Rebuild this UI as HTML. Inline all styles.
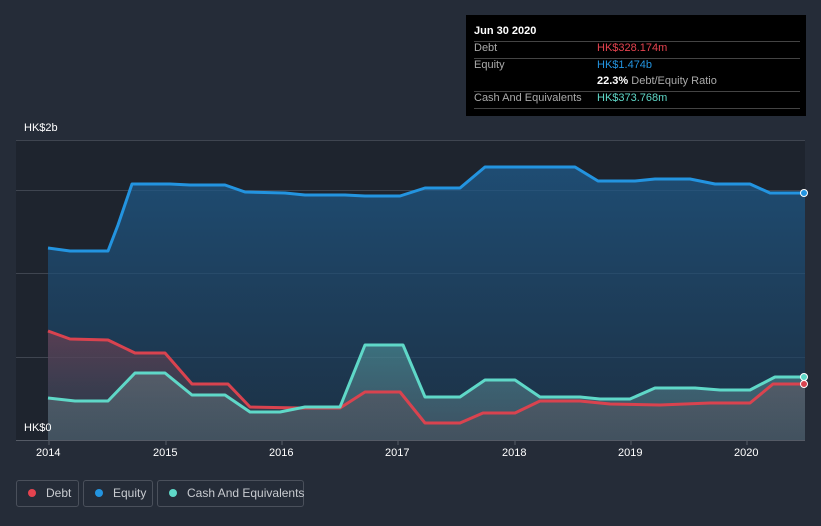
<!DOCTYPE html>
<html style="overflow:hidden;width:821px;height:526px"><head><style>
body{margin:0;width:821px;height:526px;background:#252c38;font-family:"Liberation Sans",sans-serif;overflow:hidden;position:relative}
.tt{position:absolute;left:466px;top:15px;width:340px;height:101px;background:#000;color:#fff;font-size:11px}
.tt .r{position:absolute;left:8px;right:6px;border-top:1px solid #444}
.lg{position:absolute;top:480px;height:27px;border:1px solid #4a505b;border-radius:3px;color:#c8cbd0;font-size:12px;line-height:25px;box-sizing:border-box;white-space:nowrap}
.lg i{display:inline-block;width:8px;height:8px;border-radius:50%;margin:0 10px 0 11px;vertical-align:0px}
.ax{position:absolute;color:#fff;font-size:11px}
</style></head><body>
<svg width="821" height="526" style="position:absolute;left:0;top:0">
<defs>
<linearGradient id="eq" x1="0" y1="0" x2="0" y2="1"><stop offset="0" stop-color="#1f5a8a" stop-opacity=".75"/><stop offset="1" stop-color="#1b3a55" stop-opacity=".6"/></linearGradient>
<linearGradient id="cs" x1="0" y1="0" x2="0" y2="1"><stop offset="0" stop-color="#5fb3b0" stop-opacity=".45"/><stop offset="1" stop-color="#7a8a95" stop-opacity=".35"/></linearGradient>
<linearGradient id="db" x1="0" y1="0" x2="0" y2="1"><stop offset="0" stop-color="#a0404e" stop-opacity=".45"/><stop offset="1" stop-color="#555" stop-opacity=".2"/></linearGradient>
</defs>
<rect x="16" y="140" width="789" height="300" fill="#1e242e"/>
<g stroke="#3f4550" stroke-width="1">
<line x1="16" y1="140.5" x2="805" y2="140.5"/><line x1="16" y1="190.5" x2="805" y2="190.5"/>
<line x1="16" y1="273.5" x2="805" y2="273.5"/><line x1="16" y1="357.5" x2="805" y2="357.5"/>
</g>
<path d="M48,248 L70,251 L108,251 L118,225 L132,184 L170,184 L190,185 L225,185 L245,192 L285,193 L305,195 L345,195 L365,196 L400,196 L425,188 L460,188 L485,167 L545,167 L575,167 L598,181 L635,181 L655,179 L690,179 L715,184 L750,184 L770,193 L805,193 L805,440 L48,440Z" fill="url(#eq)"/>
<path d="M48,398 L75,401 L108,401 L135,373 L165,373 L192,395 L225,395 L250,412 L280,412 L305,407 L340,407 L365,345 L403,345 L425,397 L460,397 L485,380 L515,380 L540,397 L580,397 L600,399 L630,399 L655,388 L695,388 L720,390 L750,390 L775,377 L805,377 L805,440 L48,440Z" fill="url(#cs)"/>
<path d="M48,331 L70,339 L108,340 L135,353 L165,353 L192,384 L228,384 L250,407 L300,408 L340,408 L365,392 L400,392 L425,423 L460,423 L483,413 L515,413 L540,401 L580,401 L610,404 L660,405 L710,403 L750,403 L773,384 L805,384 L805,440 L48,440Z" fill="url(#db)"/>
<g fill="none" stroke-width="3" stroke-linejoin="round">
<path d="M48,248 L70,251 L108,251 L118,225 L132,184 L170,184 L190,185 L225,185 L245,192 L285,193 L305,195 L345,195 L365,196 L400,196 L425,188 L460,188 L485,167 L545,167 L575,167 L598,181 L635,181 L655,179 L690,179 L715,184 L750,184 L770,193 L805,193" stroke="#2394e0"/>
<path d="M48,331 L70,339 L108,340 L135,353 L165,353 L192,384 L228,384 L250,407 L300,408 L340,408 L365,392 L400,392 L425,423 L460,423 L483,413 L515,413 L540,401 L580,401 L610,404 L660,405 L710,403 L750,403 L773,384 L805,384" stroke="#d9434f"/>
<path d="M48,398 L75,401 L108,401 L135,373 L165,373 L192,395 L225,395 L250,412 L280,412 L305,407 L340,407 L365,345 L403,345 L425,397 L460,397 L485,380 L515,380 L540,397 L580,397 L600,399 L630,399 L655,388 L695,388 L720,390 L750,390 L775,377 L805,377" stroke="#5fd8c8"/>
</g>
<circle cx="804" cy="193" r="3.5" fill="#2394e0" stroke="#fff" stroke-width="1"/>
<circle cx="804" cy="377" r="3.5" fill="#5fd8c8" stroke="#fff" stroke-width="1"/>
<circle cx="804" cy="384" r="3.5" fill="#d9434f" stroke="#fff" stroke-width="1"/>
<line x1="16" y1="440.5" x2="805" y2="440.5" stroke="#555b66"/>
<g stroke="#555b66"><line x1="49" y1="440" x2="49" y2="445"/><line x1="166" y1="440" x2="166" y2="445"/><line x1="282" y1="440" x2="282" y2="445"/><line x1="398" y1="440" x2="398" y2="445"/><line x1="515" y1="440" x2="515" y2="445"/><line x1="631" y1="440" x2="631" y2="445"/><line x1="747" y1="440" x2="747" y2="445"/></g>
</svg>
<div class="ax" style="left:24px;top:122px">HK$2b</div>
<div class="ax" style="left:24px;top:422px">HK$0</div>
<div class="ax" style="left:36px;top:447px">2014</div>
<div class="ax" style="left:153px;top:447px">2015</div>
<div class="ax" style="left:269px;top:447px">2016</div>
<div class="ax" style="left:385px;top:447px">2017</div>
<div class="ax" style="left:502px;top:447px">2018</div>
<div class="ax" style="left:618px;top:447px">2019</div>
<div class="ax" style="left:734px;top:447px">2020</div>
<div class="tt">
<div style="position:absolute;left:8px;top:10px;font-weight:bold">Jun 30 2020</div>
<div class="r" style="top:26px"></div>
<div style="position:absolute;left:8px;top:27px;color:#aaa">Debt</div><div style="position:absolute;left:131px;top:27px;color:#e5434f">HK$328.174m</div>
<div class="r" style="top:43px"></div>
<div style="position:absolute;left:8px;top:44px;color:#aaa">Equity</div><div style="position:absolute;left:131px;top:44px;color:#2394e0">HK$1.474b</div>
<div style="position:absolute;left:131px;top:60px;color:#aaa"><b style="color:#fff">22.3%</b> Debt/Equity Ratio</div>
<div class="r" style="top:76px"></div>
<div style="position:absolute;left:8px;top:77px;color:#aaa">Cash And Equivalents</div><div style="position:absolute;left:131px;top:77px;color:#5fd8c8">HK$373.768m</div>
<div class="r" style="top:93px"></div>
</div>
<div class="lg" style="left:16px;width:63px"><i style="background:#e5434f"></i>Debt</div>
<div class="lg" style="left:83px;width:70px"><i style="background:#2394e0"></i>Equity</div>
<div class="lg" style="left:157px;width:147px"><i style="background:#5fd8c8"></i>Cash And Equivalents</div>
</body></html>
